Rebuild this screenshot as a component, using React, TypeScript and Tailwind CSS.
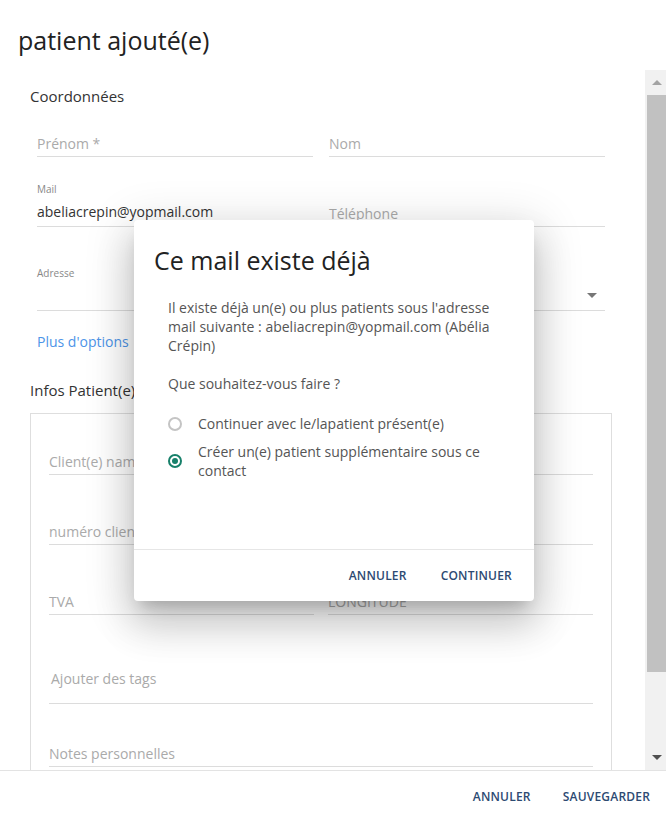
const FONT = { fontFamily: '"Open Sans", "Noto Sans", sans-serif' };

function Placeholder({ text, className = '' }: { text: string; className?: string }) {
  return (
    <div className={`flex items-end border-b border-[#dcdcdc] pb-[2px] ${className}`}>
      <span className="text-[14px] leading-[20px] text-[#aaa]">{text}</span>
    </div>
  );
}

function Radio({ checked }: { checked?: boolean }) {
  return checked ? (
    <span className="flex h-[14px] w-[14px] shrink-0 items-center justify-center rounded-full border-2 border-[#17806a]">
      <span className="h-[6px] w-[6px] rounded-full bg-[#17806a]" />
    </span>
  ) : (
    <span className="h-[14px] w-[14px] shrink-0 rounded-full border-2 border-[#c4c4c4]" />
  );
}

function Scrollbar() {
  return (
    <div className="flex w-[21px] flex-col bg-[#f1f1f1] pl-[2px]">
      <div className="flex h-[25px] items-center justify-center">
        <span className="h-0 w-0 border-x-[5px] border-b-[5px] border-x-transparent border-b-[#a3a3a3]" />
      </div>
      <div className="h-[577px] bg-[#c1c1c1]" />
      <div className="flex-1" />
      <div className="flex h-[25px] items-center justify-center">
        <span className="h-0 w-0 border-x-[5px] border-t-[5px] border-x-transparent border-t-[#505050]" />
      </div>
    </div>
  );
}

function DuplicateDialog() {
  return (
    <div className="absolute left-[134px] top-[220px] flex h-[381px] w-[400px] flex-col rounded-[4px] bg-white shadow-[0_11px_15px_-7px_rgba(0,0,0,0.2),0_24px_38px_3px_rgba(0,0,0,0.14),0_9px_46px_8px_rgba(0,0,0,0.12)]">
      <h2 className="pl-[20px] pt-[25px] text-[25px] leading-[30px] text-[#222]">Ce mail existe déjà</h2>
      <div className="flex-1 pl-[34px] pr-[20px] pt-[23px] text-[14px] leading-[19px] text-[#555]">
        <p>
          Il existe déjà un(e) ou plus patients sous l'adresse mail suivante : abeliacrepin@yopmail.com (Abélia
          Crépin)
        </p>
        <p className="mt-[19px]">Que souhaitez-vous faire ?</p>
        <div className="mt-[21px] flex items-center gap-[16px]">
          <Radio />
          <span>Continuer avec le/lapatient présent(e)</span>
        </div>
        <div className="mt-[9px] flex items-center gap-[16px]">
          <Radio checked />
          <span>
            Créer un(e) patient supplémentaire sous ce
            <br />
            contact
          </span>
        </div>
      </div>
      <div className="flex h-[52px] items-center justify-end gap-[34px] border-t border-[#e6e6e6] pr-[22px] text-[12px] font-semibold tracking-[0.2px] text-[#2d4a72]">
        <button>ANNULER</button>
        <button>CONTINUER</button>
      </div>
    </div>
  );
}

export default function App() {
  return (
    <div className="relative flex h-[815px] w-[666px] flex-col overflow-hidden bg-white" style={FONT}>
      {/* Header */}
      <div className="h-[70px] pl-[18px] pt-[24px]">
        <h1 className="text-[25px] leading-[32px] text-[#222]">patient ajouté(e)</h1>
      </div>

      {/* Scroll area */}
      <div className="flex h-[700px]">
        <div className="flex-1 overflow-hidden">
          <h3 className="pl-[30px] pt-[15px] text-[15px] leading-[22px] text-[#333]">Coordonnées</h3>

          <div className="mt-[13px] pl-[37px] pr-[40px]">
            <div className="grid grid-cols-2 gap-x-[16px]">
              <Placeholder text="Prénom *" className="h-[37px]" />
              <Placeholder text="Nom" className="h-[37px]" />

              <div className="flex h-[70px] flex-col border-b border-[#dcdcdc] pt-[25px]">
                <span className="text-[10px] leading-[14px] text-[#888]">Mail</span>
                <span className="mt-[6px] text-[14px] leading-[20px] text-[#333]">abeliacrepin@yopmail.com</span>
              </div>
              <Placeholder text="Téléphone" className="h-[70px]" />
            </div>

            <div className="flex h-[84px] flex-col border-b border-[#dcdcdc] pt-[39px]">
              <span className="text-[10px] leading-[14px] text-[#888]">Adresse</span>
              <div className="mt-[13px] flex justify-end pr-[8px]">
                <span className="h-0 w-0 border-x-[5px] border-t-[5px] border-x-transparent border-t-[#777]" />
              </div>
            </div>

            <div className="mt-[21px] text-[14px] leading-[20px] text-[#4d94e8]">Plus d'options</div>
          </div>

          <h3 className="mt-[27px] pl-[30px] text-[15px] leading-[22px] text-[#333]">Infos Patient(e)</h3>

          <div className="ml-[30px] mr-[33px] mt-[12px] h-[400px] border border-[#dedede] px-[18px]">
            <div className="grid grid-cols-2 gap-x-[14px]">
              <Placeholder text="Client(e) name" className="h-[61px]" />
              <Placeholder text="" className="h-[61px]" />
              <Placeholder text="numéro client" className="h-[70px]" />
              <Placeholder text="" className="h-[70px]" />
              <Placeholder text="TVA" className="h-[70px]" />
              <Placeholder text="LONGITUDE" className="h-[70px]" />
            </div>
            <div className="flex h-[89px] items-end border-b border-[#dcdcdc] pb-[14px] pl-[2px]">
              <span className="text-[14px] leading-[20px] text-[#aaa]">Ajouter des tags</span>
            </div>
            <Placeholder text="Notes personnelles" className="h-[63px]" />
          </div>
        </div>
        <Scrollbar />
      </div>

      {/* Footer */}
      <div className="flex h-[45px] items-center justify-end gap-[32px] border-t border-[#e3e3e3] pr-[16px] pt-[7px] text-[12px] font-semibold tracking-[0.2px] text-[#2d4a72]">
        <button>ANNULER</button>
        <button>SAUVEGARDER</button>
      </div>

      <DuplicateDialog />
    </div>
  );
}
